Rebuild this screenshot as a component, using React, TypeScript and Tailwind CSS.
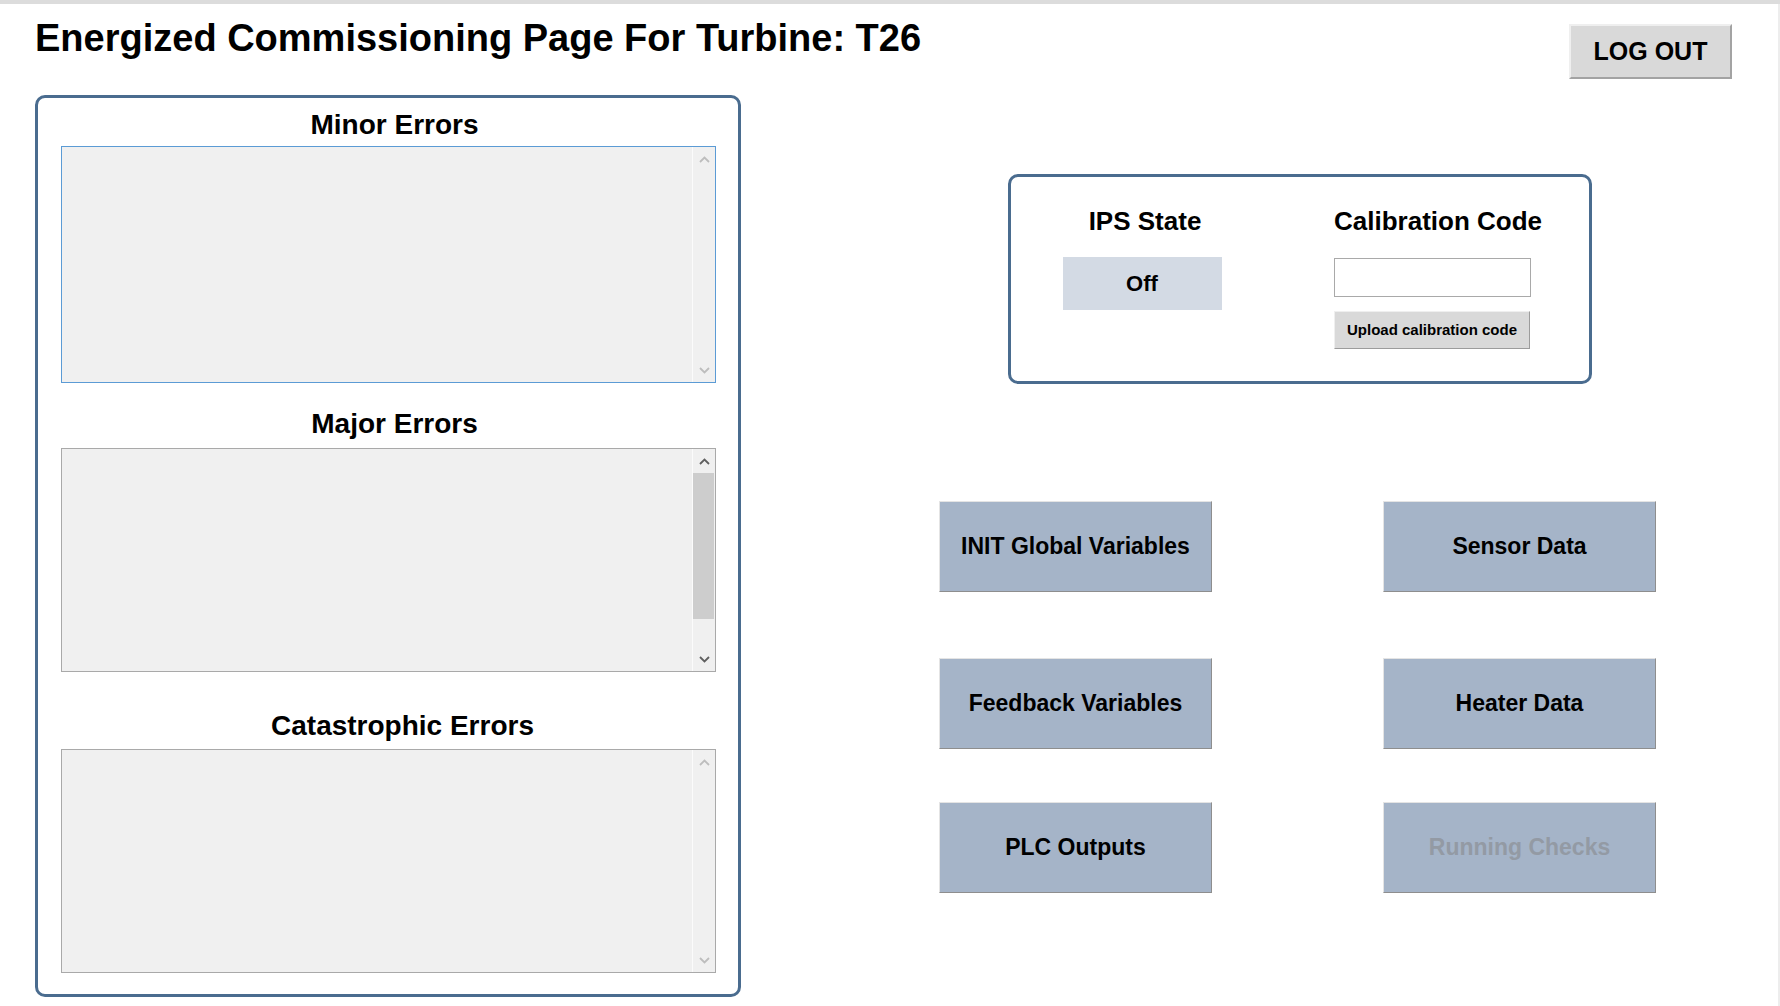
import { useState } from 'react';

function Chevron({ up, color }: { up?: boolean, color: string }) {
    return (
        <svg width="11" height="7" viewBox="0 0 11 7">
            <polyline
                points={up ? "1,6 5.5,1.5 10,6" : "1,1 5.5,5.5 10,1"}
                fill="none"
                stroke={color}
                strokeWidth="1.8"
            />
        </svg>
    );
}

interface ListBoxProps {
    height: string,
    focused?: boolean,
    active?: boolean
}

function ListBox({ height, focused, active }: ListBoxProps) {
    const arrow = active ? "#5f5f5f" : "#bdbdbd";
    return (
        <div className={`flex ${height} border bg-[#f0f0f0] ${focused ? 'border-[#5b9bd5]' : 'border-[#a9a9a9]'}`}>
            <div className="flex-1" />
            <div className="flex w-[23px] flex-col border-l border-[#fbfbfb]">
                <div className="flex h-[24px] items-center justify-center">
                    <Chevron up color={arrow} />
                </div>
                <div className="flex-1 pr-[1px]">
                    {active && <div className="h-[146px] bg-[#cdcdcd]" />}
                </div>
                <div className="flex h-[24px] items-center justify-center">
                    <Chevron color={arrow} />
                </div>
            </div>
        </div>
    );
}

function NavButton({ label, disabled }: { label: string, disabled?: boolean }) {
    return (
        <button
            className={`flex h-[91px] w-[273px] items-center justify-center border border-t-[#e4e4e4] border-l-[#e4e4e4] border-b-[#8e8e8e] border-r-[#8e8e8e] bg-[#a5b4c8] text-[23px] font-bold ${disabled ? 'text-[#939aa4]' : 'text-black'}`}
        >
            {label}
        </button>
    );
}

export default function App() {
    const [code, setCode] = useState("");

    return (
        <div className="h-[1006px] w-[1780px] overflow-hidden bg-white font-['Liberation_Sans',Arial,sans-serif] text-black">
            <div className="h-[4px] bg-[#dcdcdc]" />
            <div className="flex h-[1002px] border-r-2 border-[#ededed]">
                {/* left side: title + error lists */}
                <div className="w-[741px] shrink-0 pl-[35px]">
                    <div className="h-[91px] pt-[13px]">
                        <h1 className="whitespace-nowrap text-[38px] font-bold leading-[42px]">
                            Energized Commissioning Page For Turbine: T26
                        </h1>
                    </div>

                    <div className="h-[902px] w-[706px] rounded-[10px] border-[3px] border-[#4a6c8f] px-[22px] pt-[11px] pl-[23px]">
                        <h2 className="mb-[5px] pl-[12px] text-center text-[28px] font-bold leading-[32px]">Minor Errors</h2>
                        <ListBox height="h-[237px]" focused />

                        <h2 className="mt-[25px] mb-[8px] pl-[12px] text-center text-[28px] font-bold leading-[32px]">Major Errors</h2>
                        <ListBox height="h-[224px]" active />

                        <h2 className="mt-[38px] mb-[7px] pl-[28px] text-center text-[28px] font-bold leading-[32px]">Catastrophic Errors</h2>
                        <ListBox height="h-[224px]" />
                    </div>
                </div>

                {/* right side */}
                <div className="flex flex-1 flex-col">
                    <div className="flex justify-end pt-[20px] pr-[46px]">
                        <button className="h-[55px] w-[163px] border-2 border-t-[#efefef] border-l-[#efefef] border-b-[#a3a3a3] border-r-[#a3a3a3] bg-[#d9d9d9] text-[25px] font-bold">
                            LOG OUT
                        </button>
                    </div>

                    <div className="mt-[95px] ml-[267px] flex h-[210px] w-[584px] rounded-[10px] border-[3px] border-[#4a6c8f] pt-[30px] pl-[31px]">
                        <div className="flex w-[200px] flex-col items-center">
                            <h3 className="pl-[6px] text-[26px] font-bold leading-[28px]">IPS State</h3>
                            <div className="mt-[22px] flex h-[53px] w-[159px] items-center justify-center bg-[#d3dae4] text-[22px] font-bold">
                                Off
                            </div>
                        </div>
                        <div className="ml-[92px] flex w-[197px] flex-col items-start">
                            <h3 className="whitespace-nowrap text-[26px] font-bold leading-[28px]">Calibration Code</h3>
                            <input
                                value={code}
                                onChange={(e) => setCode(e.target.value)}
                                className="mt-[23px] h-[39px] w-[197px] border border-[#a9a9a9] bg-white px-2 text-[16px] outline-none"
                            />
                            <button className="mt-[14px] h-[38px] w-[196px] border border-t-[#efefef] border-l-[#efefef] border-b-[#9c9c9c] border-r-[#9c9c9c] bg-[#d9d9d9] text-[15px] font-bold">
                                Upload calibration code
                            </button>
                        </div>
                    </div>

                    <div className="mt-[117px] ml-[198px] flex flex-col">
                        <div className="flex gap-[171px]">
                            <NavButton label="INIT Global Variables" />
                            <NavButton label="Sensor Data" />
                        </div>
                        <div className="mt-[66px] flex gap-[171px]">
                            <NavButton label="Feedback Variables" />
                            <NavButton label="Heater Data" />
                        </div>
                        <div className="mt-[53px] flex gap-[171px]">
                            <NavButton label="PLC Outputs" />
                            <NavButton label="Running Checks" disabled />
                        </div>
                    </div>
                </div>
            </div>
        </div>
    );
}
